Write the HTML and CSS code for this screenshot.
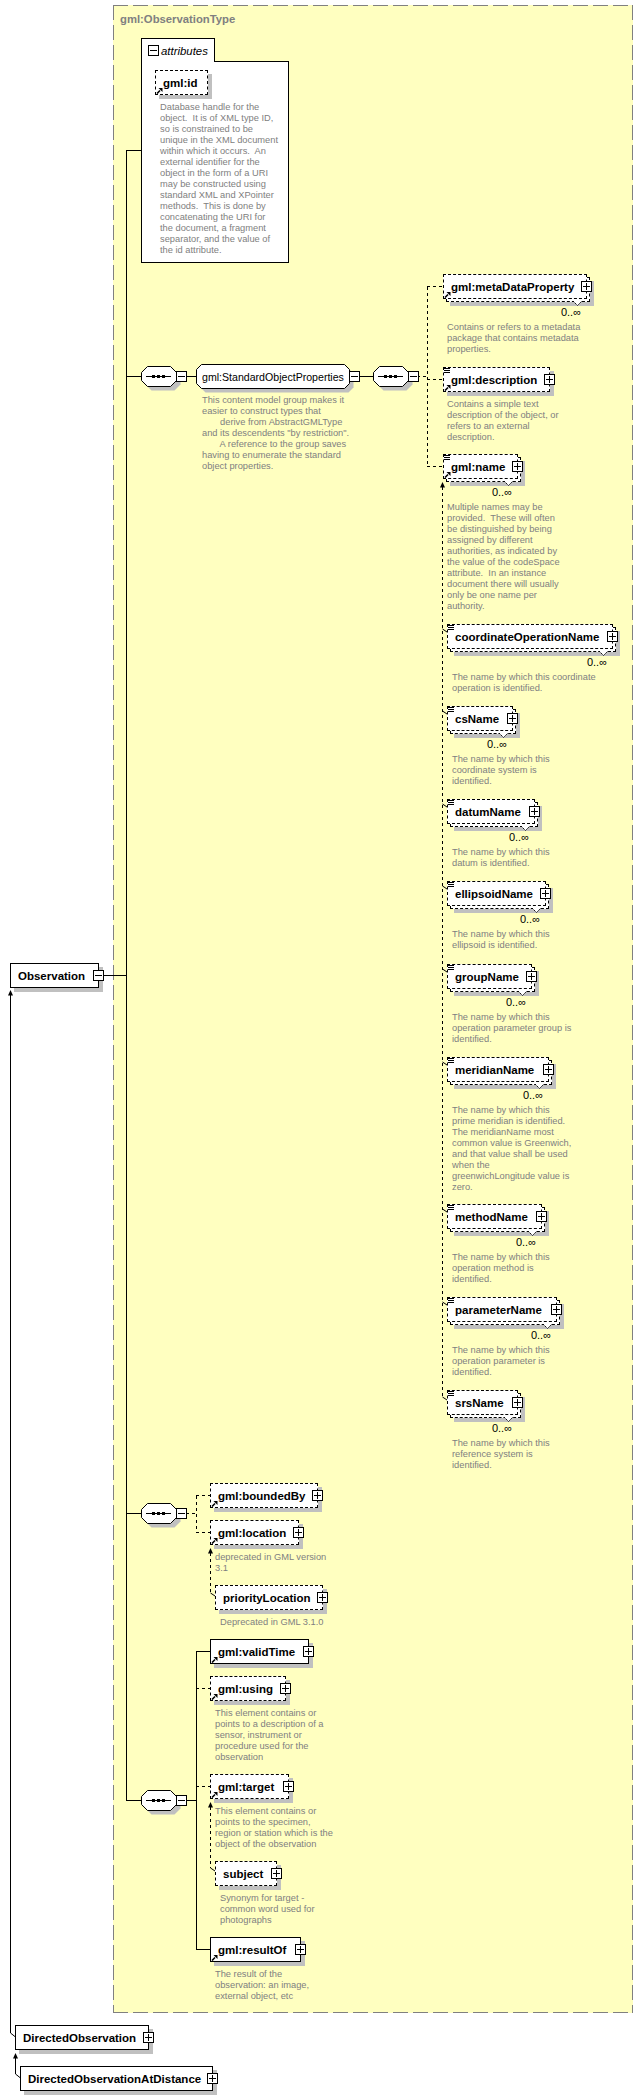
FILE: index.html
```html
<!DOCTYPE html>
<html lang="en">
<head>
<meta charset="utf-8">
<title>Observation schema diagram</title>
<link rel="stylesheet" href="styles.css">
</head>
<body>
<svg class="defs" aria-hidden="true">
  <symbol id="arrow" viewBox="0 0 7 7"><path d="M1 6.5 L4 3.5" stroke="#000" stroke-width="1.6" fill="none"/><path d="M2.5 1 H6.5 V5 Z" fill="#000"/></symbol>
  <symbol id="notch" viewBox="0 0 9 5"><path d="M0 0 L4.5 4.5 L9 0" fill="#fff" stroke="#000" stroke-width="1" stroke-dasharray="2 1"/></symbol>
  <symbol id="seq" viewBox="0 0 40 25">
    <path d="M10.5 4.5 H33.5 L39.5 10.5 V18.5 L33.5 24.5 H10.5 L4.5 18.5 V10.5 Z" fill="#c0c0c0"/>
    <path d="M6.5 .5 H29.5 L35.5 6.5 V14.5 L29.5 20.5 H6.5 L.5 14.5 V6.5 Z" fill="#fff" stroke="#000"/>
    <path d="M5 10.5 H30" stroke="#000"/>
    <path d="M11 9 H14 V12 H11 Z M16 9 H19 V12 H16 Z M21 9 H24 V12 H21 Z" fill="#000"/>
  </symbol>
</svg>

<main class="canvas">
  <section class="type-box">
    <h1 class="type-title">gml:ObservationType</h1>
  </section>

  <svg class="wires" width="643" height="2100" aria-hidden="true">
    <path class="w" d="M126.5 150.5 V1800.5 M126 150.5 H141 M103 975.5 H126 M126 376.5 H141 M186 376.5 H196 M359 376.5 H373 M126 1513.5 H141 M126 1800.5 H141 M186 1800.5 H196 M196.5 1651.5 V1949.5 M196 1651.5 H210 M196 1949.5 H210"/>
    <path class="w d" d="M417 376.5 H427 M427.5 286.5 V466.5 M427 286.5 H443 M427 379.5 H443 M427 466.5 H443 M442.5 487 V1397 M186 1513.5 H196 M196.5 1495.5 V1532.5 M196 1495.5 H210 M196 1532.5 H210 M210.5 1553 V1593 M210.5 1807 V1868 M196 1688.5 H210 M196 1786.5 H210"/>
    <path class="t" d="M10.5 995 V2033 L15.5 2037 M15.5 2058 V2074 L20.5 2078 M442.5 629 L447 632 M442.5 711 L447 714 M442.5 804 L447 807 M442.5 886 L447 889 M442.5 969 L447 972 M442.5 1062 L447 1065 M442.5 1209 L447 1212 M442.5 1302 L447 1305 M442.5 1397 L447 1400 M210.5 1593 L215 1596 M210.5 1868 L215 1871"/>
    <path class="head" d="M10.5 990 L13 995.5 H8 Z M15.5 2053 L18 2058.5 H13 Z M442.5 482 L445 487.5 H440 Z M210.5 1548 L213 1553.5 H208 Z M210.5 1802 L213 1807.5 H208 Z"/>
  </svg>

  <div class="attrs">
    <div class="attrs-tab"><span class="toggle minus"></span><span class="attrs-name">attributes</span></div>
    <div class="attrs-panel">
      <div class="item i-id">
        <div class="box"><svg class="arrow"><use href="#arrow"/></svg><span class="label">gml:id</span></div>
<p class="doc">Database handle for the
object.  It is of XML type ID,
so is constrained to be
unique in the XML document
within which it occurs.  An
external identifier for the
object in the form of a URI
may be constructed using
standard XML and XPointer
methods.  This is done by
concatenating the URI for
the document, a fragment
separator, and the value of
the id attribute.</p>
      </div>
    </div>
  </div>

  <div class="seq s-1"><svg class="seq-shape"><use href="#seq"/></svg><span class="toggle minus"></span></div>
  <div class="group">
    <svg class="group-shape" viewBox="0 0 158 29"><path d="M9.5 4.5 H152.5 L157.5 9.5 V23.5 L152.5 28.5 H9.5 L4.5 23.5 V9.5 Z" fill="#c0c0c0"/><path d="M5.5 .5 H148.5 L153.5 5.5 V19.5 L148.5 24.5 H5.5 L.5 19.5 V5.5 Z" fill="#fff" stroke="#000"/></svg>
    <span class="group-name">gml:StandardObjectProperties</span>
    <span class="toggle minus"></span>
  </div>
<p class="doc group-doc">This content model group makes it
easier to construct types that
       derive from AbstractGMLType
and its descendents "by restriction".
       A reference to the group saves
having to enumerate the standard
object properties.</p>
  <div class="seq s-2"><svg class="seq-shape"><use href="#seq"/></svg><span class="toggle minus"></span></div>
  <div class="seq s-3"><svg class="seq-shape"><use href="#seq"/></svg><span class="toggle minus"></span></div>
  <div class="seq s-4"><svg class="seq-shape"><use href="#seq"/></svg><span class="toggle minus"></span></div>

  <div class="item near i-meta">
    <div class="box multi"><svg class="arrow"><use href="#arrow"/></svg><span class="label">gml:metaDataProperty</span><span class="toggle"></span><svg class="notch"><use href="#notch"/></svg></div>
    <div class="occ">0..∞</div>
<p class="doc">Contains or refers to a metadata
package that contains metadata
properties.</p>
  </div>
  <div class="item near i-desc">
    <div class="box"><i class="lines"></i><svg class="arrow"><use href="#arrow"/></svg><span class="label">gml:description</span><span class="toggle"></span></div>
<p class="doc">Contains a simple text
description of the object, or
refers to an external
description.</p>
  </div>
  <div class="item near i-name">
    <div class="box multi"><i class="lines"></i><svg class="arrow"><use href="#arrow"/></svg><span class="label">gml:name</span><span class="toggle"></span><svg class="notch"><use href="#notch"/></svg></div>
    <div class="occ">0..∞</div>
<p class="doc">Multiple names may be
provided.  These will often
be distinguished by being
assigned by different
authorities, as indicated by
the value of the codeSpace
attribute.  In an instance
document there will usually
only be one name per
authority.</p>
  </div>
  <div class="item i-coord">
    <div class="box multi"><i class="lines"></i><span class="label">coordinateOperationName</span><span class="toggle"></span><svg class="notch"><use href="#notch"/></svg></div>
    <div class="occ">0..∞</div>
<p class="doc">The name by which this coordinate
operation is identified.</p>
  </div>
  <div class="item i-cs">
    <div class="box multi"><i class="lines"></i><span class="label">csName</span><span class="toggle"></span><svg class="notch"><use href="#notch"/></svg></div>
    <div class="occ">0..∞</div>
<p class="doc">The name by which this
coordinate system is
identified.</p>
  </div>
  <div class="item i-datum">
    <div class="box multi"><i class="lines"></i><span class="label">datumName</span><span class="toggle"></span><svg class="notch"><use href="#notch"/></svg></div>
    <div class="occ">0..∞</div>
<p class="doc">The name by which this
datum is identified.</p>
  </div>
  <div class="item i-ellipsoid">
    <div class="box multi"><i class="lines"></i><span class="label">ellipsoidName</span><span class="toggle"></span><svg class="notch"><use href="#notch"/></svg></div>
    <div class="occ">0..∞</div>
<p class="doc">The name by which this
ellipsoid is identified.</p>
  </div>
  <div class="item i-groupname">
    <div class="box multi"><i class="lines"></i><span class="label">groupName</span><span class="toggle"></span><svg class="notch"><use href="#notch"/></svg></div>
    <div class="occ">0..∞</div>
<p class="doc">The name by which this
operation parameter group is
identified.</p>
  </div>
  <div class="item i-meridian">
    <div class="box multi"><i class="lines"></i><span class="label">meridianName</span><span class="toggle"></span><svg class="notch"><use href="#notch"/></svg></div>
    <div class="occ">0..∞</div>
<p class="doc">The name by which this
prime meridian is identified.
The meridianName most
common value is Greenwich,
and that value shall be used
when the
greenwichLongitude value is
zero.</p>
  </div>
  <div class="item i-method">
    <div class="box multi"><i class="lines"></i><span class="label">methodName</span><span class="toggle"></span><svg class="notch"><use href="#notch"/></svg></div>
    <div class="occ">0..∞</div>
<p class="doc">The name by which this
operation method is
identified.</p>
  </div>
  <div class="item i-parameter">
    <div class="box multi"><i class="lines"></i><span class="label">parameterName</span><span class="toggle"></span><svg class="notch"><use href="#notch"/></svg></div>
    <div class="occ">0..∞</div>
<p class="doc">The name by which this
operation parameter is
identified.</p>
  </div>
  <div class="item i-srs">
    <div class="box multi"><i class="lines"></i><span class="label">srsName</span><span class="toggle"></span><svg class="notch"><use href="#notch"/></svg></div>
    <div class="occ">0..∞</div>
<p class="doc">The name by which this
reference system is
identified.</p>
  </div>

  <div class="item i-bounded">
    <div class="box"><svg class="arrow"><use href="#arrow"/></svg><span class="label">gml:boundedBy</span><span class="toggle"></span></div>
  </div>
  <div class="item i-location">
    <div class="box"><svg class="arrow"><use href="#arrow"/></svg><span class="label">gml:location</span><span class="toggle"></span></div>
<p class="doc">deprecated in GML version
3.1</p>
  </div>
  <div class="item i-priority">
    <div class="box"><span class="label">priorityLocation</span><span class="toggle"></span></div>
<p class="doc">Deprecated in GML 3.1.0</p>
  </div>
  <div class="item i-valid">
    <div class="box solid"><svg class="arrow"><use href="#arrow"/></svg><span class="label">gml:validTime</span><span class="toggle"></span></div>
  </div>
  <div class="item i-using">
    <div class="box"><svg class="arrow"><use href="#arrow"/></svg><span class="label">gml:using</span><span class="toggle"></span></div>
<p class="doc">This element contains or
points to a description of a
sensor, instrument or
procedure used for the
observation</p>
  </div>
  <div class="item i-target">
    <div class="box"><svg class="arrow"><use href="#arrow"/></svg><span class="label">gml:target</span><span class="toggle"></span></div>
<p class="doc">This element contains or
points to the specimen,
region or station which is the
object of the observation</p>
  </div>
  <div class="item i-subject">
    <div class="box"><span class="label">subject</span><span class="toggle"></span></div>
<p class="doc">Synonym for target -
common word used for
photographs</p>
  </div>
  <div class="item i-result">
    <div class="box solid"><svg class="arrow"><use href="#arrow"/></svg><span class="label">gml:resultOf</span><span class="toggle"></span></div>
<p class="doc">The result of the
observation: an image,
external object, etc</p>
  </div>

  <div class="item i-obs">
    <div class="box solid"><span class="label">Observation</span><span class="toggle minus"></span></div>
  </div>
  <div class="item i-directed">
    <div class="box solid"><span class="label">DirectedObservation</span><span class="toggle"></span></div>
  </div>
  <div class="item i-distance">
    <div class="box solid"><span class="label">DirectedObservationAtDistance</span><span class="toggle"></span></div>
  </div>
</main>
</body>
</html>
```
FILE: styles.css
```css
html, body {
  margin: 0;
  padding: 0;
  background: #fff;
}

.defs {
  position: absolute;
  width: 0;
  height: 0;
}

.canvas {
  position: relative;
  width: 643px;
  height: 2100px;
  overflow: hidden;
  font-family: "Liberation Sans", Arial, sans-serif;
  color: #000;
}

/* type container */
.type-box {
  position: absolute;
  left: 113px;
  top: 5px;
  width: 520px;
  height: 2008px;
  box-sizing: border-box;
  padding: 7px 0 0 7px;
  background-color: #ffffc0;
  background-image:
    repeating-linear-gradient(90deg, #808080 0 15px, transparent 15px 20px),
    repeating-linear-gradient(90deg, #808080 0 15px, transparent 15px 20px),
    repeating-linear-gradient(180deg, #808080 0 15px, transparent 15px 20px),
    repeating-linear-gradient(180deg, #808080 0 15px, transparent 15px 20px);
  background-size: 100% 1px, 100% 1px, 1px 100%, 1px 100%;
  background-position: 0 0, 0 100%, 0 0, 100% 0;
  background-repeat: no-repeat;
}

.type-title {
  margin: 0;
  font-size: 11.3px;
  line-height: 14px;
  font-weight: 700;
  color: #808080;
}

/* connectors */
.wires {
  position: absolute;
  left: 0;
  top: 0;
}

.w {
  fill: none;
  stroke: #000;
  stroke-width: 1;
  shape-rendering: crispEdges;
}

.w.d {
  stroke-dasharray: 3 3;
}

.t {
  fill: none;
  stroke: #000;
  stroke-width: 1;
}

.head {
  fill: #000;
}

/* attributes panel */
.attrs {
  position: absolute;
  left: 141px;
  top: 38px;
}

.attrs-tab {
  position: relative;
  z-index: 1;
  display: flex;
  align-items: center;
  gap: 2px;
  box-sizing: border-box;
  width: 74px;
  height: 24px;
  margin-bottom: -1px;
  padding-left: 6px;
  background: #fff;
  border: 1px solid #000;
  border-bottom: 0;
}

.attrs-tab .toggle {
  position: static;
}

.attrs-name {
  font-size: 11.4px;
  font-style: italic;
}

.attrs-panel {
  box-sizing: border-box;
  width: 148px;
  height: 202px;
  padding: 8px 0 0 13px;
  background: #fff;
  border: 1px solid #000;
}

/* element nodes */
.item {
  position: absolute;
  --w: 100px;
}

.box {
  position: relative;
  display: flex;
  align-items: center;
  box-sizing: border-box;
  width: var(--w);
  height: 25px;
  padding-left: 8px;
}

.box::before {
  content: "";
  position: absolute;
  inset: 0;
  box-sizing: border-box;
  background: #fff;
  border: 1px dashed #000;
  box-shadow: 4px 4px 0 #c0c0c0;
}

.box.multi::before {
  inset: 3px -3px -3px 3px;
}

.box.multi::after {
  content: "";
  position: absolute;
  inset: 0;
  box-sizing: border-box;
  background: #fff;
  border: 1px dashed #000;
}

.box.solid::before {
  border-style: solid;
}

.label {
  position: relative;
  z-index: 1;
  font-size: 11.5px;
  font-weight: 700;
  white-space: nowrap;
}

.toggle {
  position: absolute;
  z-index: 1;
  left: calc(var(--w) - 6px);
  top: 7px;
  box-sizing: border-box;
  flex: none;
  width: 11px;
  height: 11px;
  border: 1px solid #000;
  background:
    linear-gradient(#000, #000) center / 7px 1px no-repeat,
    linear-gradient(#000, #000) center / 1px 7px no-repeat,
    #fff;
}

.toggle.minus {
  background:
    linear-gradient(#000, #000) center / 7px 1px no-repeat,
    #fff;
}

.arrow {
  position: absolute;
  z-index: 1;
  left: 1px;
  top: 17px;
  width: 7px;
  height: 7px;
}

.lines {
  position: absolute;
  z-index: 1;
  left: 1px;
  top: 1px;
  width: 6px;
  height: 5px;
  background: repeating-linear-gradient(#000 0 1px, #fff 1px 2px);
}

.notch {
  position: absolute;
  z-index: 1;
  left: calc(var(--w) - 14px);
  top: 27px;
  width: 9px;
  height: 5px;
}

.occ {
  box-sizing: border-box;
  width: var(--w);
  margin-top: 7px;
  padding-right: 6px;
  font-size: 11px;
  line-height: 12px;
  text-align: right;
  white-space: nowrap;
}

.doc {
  margin: 7px 0 0 5px;
  font-size: 9.3px;
  line-height: 11px;
  color: #808080;
  white-space: pre;
}

.occ + .doc {
  margin-top: 4px;
}

.near .doc {
  margin-left: 4px;
}

/* compositors */
.seq {
  position: absolute;
  left: 141px;
  width: 36px;
  height: 21px;
}

.seq-shape {
  display: block;
  width: 40px;
  height: 25px;
}

.seq .toggle {
  left: 35px;
  top: 5px;
}

.s-1 { top: 366px; }
.s-2 { left: 373px; top: 366px; }
.s-3 { top: 1503px; }
.s-4 { top: 1790px; }

.group {
  position: absolute;
  left: 196px;
  top: 364px;
  display: flex;
  align-items: center;
  box-sizing: border-box;
  width: 154px;
  height: 25px;
  padding-left: 6px;
}

.group-shape {
  position: absolute;
  left: 0;
  top: 0;
  width: 158px;
  height: 29px;
}

.group-name {
  position: relative;
  font-size: 10.6px;
  white-space: nowrap;
}

.group .toggle {
  left: 153px;
  top: 7px;
}

.group-doc {
  position: absolute;
  left: 202px;
  top: 395px;
  margin: 0;
}

/* node placement on the diagram */
.i-id { position: static; --w: 53px; }
.i-meta { left: 443px; top: 274px; --w: 144px; }
.i-desc { left: 443px; top: 367px; --w: 107px; }
.i-name { left: 443px; top: 454px; --w: 75px; }
.i-coord { left: 447px; top: 624px; --w: 166px; }
.i-cs { left: 447px; top: 706px; --w: 66px; }
.i-datum { left: 447px; top: 799px; --w: 88px; }
.i-ellipsoid { left: 447px; top: 881px; --w: 99px; }
.i-groupname { left: 447px; top: 964px; --w: 85px; }
.i-meridian { left: 447px; top: 1057px; --w: 102px; }
.i-method { left: 447px; top: 1204px; --w: 95px; }
.i-parameter { left: 447px; top: 1297px; --w: 110px; }
.i-srs { left: 447px; top: 1390px; --w: 71px; }
.i-bounded { left: 210px; top: 1483px; --w: 108px; }
.i-location { left: 210px; top: 1520px; --w: 89px; }
.i-priority { left: 215px; top: 1585px; --w: 108px; }
.i-valid { left: 210px; top: 1639px; --w: 99px; }
.i-using { left: 210px; top: 1676px; --w: 76px; }
.i-target { left: 210px; top: 1774px; --w: 79px; }
.i-subject { left: 215px; top: 1861px; --w: 62px; }
.i-result { left: 210px; top: 1937px; --w: 91px; }
.i-obs { left: 10px; top: 963px; --w: 89px; }
.i-directed { left: 15px; top: 2025px; --w: 134px; }
.i-distance { left: 20px; top: 2066px; --w: 193px; }
```
